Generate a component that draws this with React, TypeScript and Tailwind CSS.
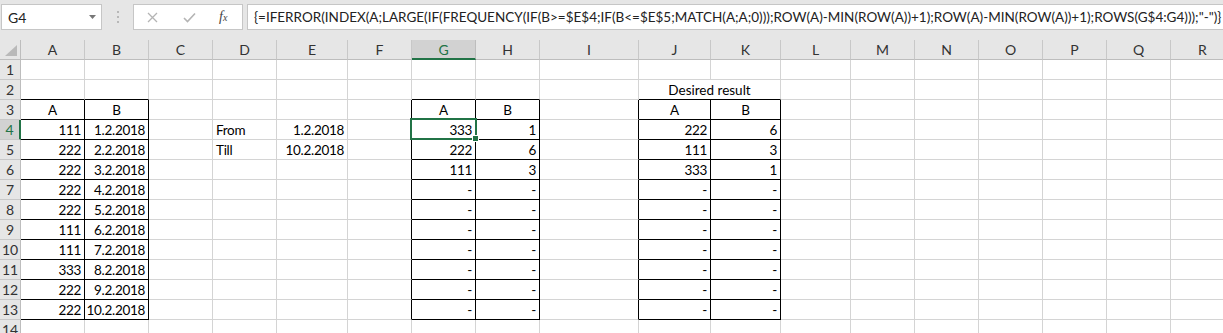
import React from "react";

type Col = { l: string; w: string };
const COLS: Col[] = [
  { l: "A", w: "w-[64px]" },
  { l: "B", w: "w-[64px]" },
  { l: "C", w: "w-[64px]" },
  { l: "D", w: "w-[64px]" },
  { l: "E", w: "w-[71px]" },
  { l: "F", w: "w-[64px]" },
  { l: "G", w: "w-[64px]" },
  { l: "H", w: "w-[64px]" },
  { l: "I", w: "w-[99px]" },
  { l: "J", w: "w-[72px]" },
  { l: "K", w: "w-[70px]" },
  { l: "L", w: "w-[70px]" },
  { l: "M", w: "w-[64px]" },
  { l: "N", w: "w-[64px]" },
  { l: "O", w: "w-[64px]" },
  { l: "P", w: "w-[64px]" },
  { l: "Q", w: "w-[64px]" },
  { l: "R", w: "w-[64px]" },
];

type Cell = { t: string; a: "l" | "r" | "c" };
const DATA: Record<string, Cell> = {
  A3: { t: "A", a: "c" },
  B3: { t: "B", a: "c" },
  G3: { t: "A", a: "c" },
  H3: { t: "B", a: "c" },
  J3: { t: "A", a: "c" },
  K3: { t: "B", a: "c" },
  D4: { t: "From", a: "l" },
  E4: { t: "1.2.2018", a: "r" },
  D5: { t: "Till", a: "l" },
  E5: { t: "10.2.2018", a: "r" },
};
const colA = ["111", "222", "222", "222", "222", "111", "111", "333", "222", "222"];
colA.forEach((v, i) => {
  DATA["A" + (i + 4)] = { t: v, a: "r" };
  DATA["B" + (i + 4)] = { t: `${i + 1}.2.2018`, a: "r" };
});
const gA = ["333", "222", "111"];
const gB = ["1", "6", "3"];
const jA = ["222", "111", "333"];
const jB = ["6", "3", "1"];
for (let r = 4; r <= 13; r++) {
  const i = r - 4;
  DATA["G" + r] = { t: i < 3 ? gA[i] : "-", a: "r" };
  DATA["H" + r] = { t: i < 3 ? gB[i] : "-", a: "r" };
  DATA["J" + r] = { t: i < 3 ? jA[i] : "-", a: "r" };
  DATA["K" + r] = { t: i < 3 ? jB[i] : "-", a: "r" };
}

const inTable = (c: string, r: number) =>
  r >= 3 && r <= 13 && ["A", "B", "G", "H", "J", "K"].includes(c);

const ROWS = Array.from({ length: 14 }, (_, i) => i + 1);

const FORMULA =
  '{=IFERROR(INDEX(A;LARGE(IF(FREQUENCY(IF(B>=$E$4;IF(B<=$E$5;MATCH(A;A;0)));ROW(A)-MIN(ROW(A))+1);ROW(A)-MIN(ROW(A))+1);ROWS(G$4:G4)));"-")}';

function DataCell({ col, idx, r }: { col: Col; idx: number; r: number }) {
  const next = COLS[idx + 1];
  const black = inTable(col.l, r);
  const rightBlack = black || (next ? inTable(next.l, r) : false);
  const bottomBlack = black || inTable(col.l, r + 1);
  const d = DATA[col.l + r];
  const sel = col.l === "G" && r === 4;
  return (
    <div
      className={`${col.w} relative shrink-0 h-full border-r border-b flex items-center ${
        rightBlack ? "border-r-black" : "border-r-[#d4d4d4]"
      } ${bottomBlack ? "border-b-black" : "border-b-[#d4d4d4]"} ${
        d?.a === "r" ? "justify-end pr-[3px]" : d?.a === "c" ? "justify-center" : "justify-start pl-[3px]"
      }`}
    >
      {d && <span className="whitespace-nowrap leading-none pt-[2px] tracking-[-0.3px]">{d.t}</span>}
      {sel && (
        <>
          <div className="absolute left-[-2px] top-[-2px] w-[67px] h-[22px] border-2 border-[#217346] z-10" />
          <div className="absolute left-[60px] top-[15px] w-[7px] h-[7px] bg-[#217346] border border-white z-20" />
        </>
      )}
    </div>
  );
}

export default function App() {
  return (
    <div className="w-[1223px] h-[333px] overflow-hidden bg-white text-[13.5px] text-black font-['Lato','Open_Sans',sans-serif]">
      {/* Formula bar */}
      <div className="h-[40px] bg-[#e6e6e6] flex items-start pt-[4px] pl-[1px]">
        <div className="w-[101px] h-[26px] bg-white border border-[#c6c6c6] flex items-center justify-between pl-[6px] pr-[5px] shrink-0">
          <span className="text-[14px] text-[#222]">G4</span>
          <svg width="7" height="4" viewBox="0 0 7 4">
            <path d="M0 0 L7 0 L3.5 4 Z" fill="#777" />
          </svg>
        </div>
        <div className="w-[31px] h-[26px] flex flex-col items-center justify-center gap-[3px] shrink-0">
          <div className="w-[2px] h-[2px] bg-[#b8b8b8]" />
          <div className="w-[2px] h-[2px] bg-[#b8b8b8]" />
          <div className="w-[2px] h-[2px] bg-[#b8b8b8]" />
        </div>
        <div className="w-[110px] h-[26px] bg-white border border-[#c6c6c6] flex items-center shrink-0 pl-[13px]">
          <svg width="11" height="11" viewBox="0 0 11 11" className="shrink-0">
            <path d="M1 1 L10 10 M10 1 L1 10" stroke="#b4b4b4" strokeWidth="1.3" />
          </svg>
          <svg width="13" height="11" viewBox="0 0 13 11" className="ml-[25px] shrink-0">
            <path d="M1 6 L4.5 9.5 L12 1.5" stroke="#b4b4b4" strokeWidth="1.6" fill="none" />
          </svg>
          <span className="ml-[23px] italic font-['Liberation_Serif',serif] text-[14px] text-[#444] leading-none">
            f<span className="text-[10px]">x</span>
          </span>
        </div>
        <div className="ml-[4px] flex-1 h-[26px] bg-white border border-[#c6c6c6] border-r-0 flex items-center pl-[6px] overflow-hidden">
          <span className="whitespace-nowrap text-[13.5px] text-[#222]">{FORMULA}</span>
        </div>
      </div>

      {/* Column headers */}
      <div className="h-[20px] flex bg-[#e6e6e6] text-[14px]">
        <div className="w-[21px] shrink-0 h-full border-r border-b border-[#bdbdbd] flex items-end justify-end pr-[3px] pb-[3px]">
          <svg width="12" height="11" viewBox="0 0 12 11">
            <path d="M12 0 L12 11 L0 11 Z" fill="#b9b9b9" />
          </svg>
        </div>
        {COLS.map((c) =>
          c.l === "G" ? (
            <div
              key={c.l}
              className={`${c.w} shrink-0 h-full bg-[#d2d2d2] border-r border-r-[#bdbdbd] border-b-2 border-b-[#217346] flex items-center justify-center text-[#217346]`}
            >
              {c.l}
            </div>
          ) : (
            <div
              key={c.l}
              className={`${c.w} shrink-0 h-full border-r border-r-[#c8c8c8] border-b border-b-[#bdbdbd] flex items-center justify-center text-[#333]`}
            >
              {c.l}
            </div>
          )
        )}
      </div>

      {/* Rows */}
      {ROWS.map((r) => (
        <div key={r} className="h-[20px] flex">
          {r === 4 ? (
            <div className="w-[21px] shrink-0 h-full bg-[#d2d2d2] border-r-2 border-r-[#217346] border-b border-b-[#c8c8c8] flex items-center justify-center text-[14px] text-[#217346]">
              {r}
            </div>
          ) : (
            <div className="w-[21px] shrink-0 h-full bg-[#e6e6e6] border-r border-r-[#bdbdbd] border-b border-b-[#c8c8c8] flex items-center justify-center text-[14px] text-[#333]">
              {r}
            </div>
          )}
          {COLS.map((c, idx) => {
            if (r === 2 && c.l === "K") return null;
            if (r === 2 && c.l === "J") {
              return (
                <div
                  key={c.l}
                  className="w-[142px] shrink-0 h-full border-r border-r-[#d4d4d4] border-b border-b-black flex items-center justify-center"
                >
                  <span className="whitespace-nowrap leading-none pt-[2px]">Desired result</span>
                </div>
              );
            }
            return <DataCell key={c.l} col={c} idx={idx} r={r} />;
          })}
        </div>
      ))}
    </div>
  );
}
